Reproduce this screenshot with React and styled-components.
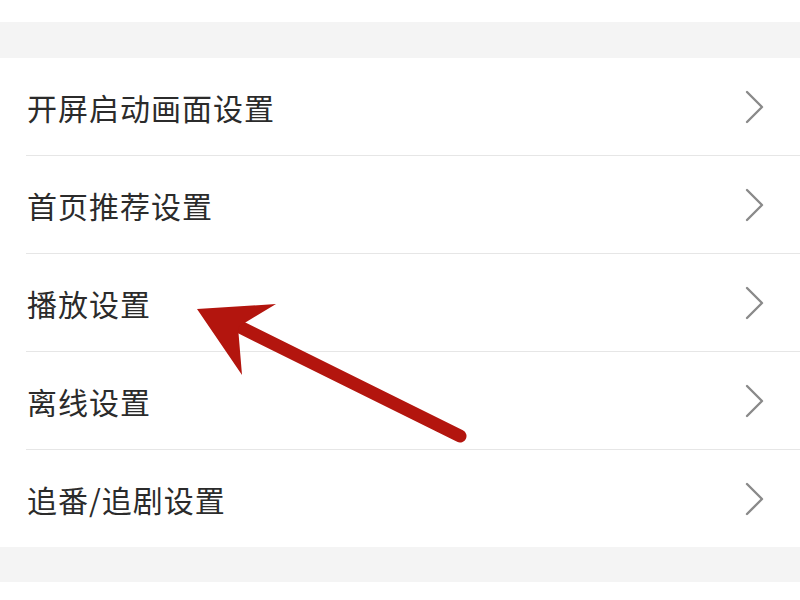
import React from "react";
import styled, { createGlobalStyle } from "styled-components";

const Global = createGlobalStyle`
  html, body {
    margin: 0;
    padding: 0;
    background: #ffffff;
  }
  body {
    font-family: "Noto Sans CJK SC", "Noto Sans", sans-serif;
  }
`;

const Page = styled.div`
  position: relative;
  width: 800px;
  height: 600px;
  overflow: hidden;
  background: #ffffff;
`;

const TopStrip = styled.div`
  height: 22px;
  background: #ffffff;
`;

const Band = styled.div`
  height: ${props => props.h}px;
  background: #f4f4f4;
`;

const List = styled.div`
  background: #ffffff;
  padding-left: 26px;
`;

const Row = styled.div`
  height: 97px;
  display: flex;
  align-items: center;
  justify-content: space-between;
  padding-right: 35px;
  border-bottom: ${props => (props.last ? "none" : "1px solid #e6e6e6")};
`;

const Label = styled.span`
  font-size: 30px;
  color: #2b2b2b;
  letter-spacing: 1px;
  padding-left: 1px;
  line-height: 1;
`;

const Chevron = () => (
  <svg width="20" height="34" viewBox="0 0 20 34">
    <path d="M2 2 L17 17 L2 32" fill="none" stroke="#8a8a8a" strokeWidth="2.4" strokeLinecap="round" strokeLinejoin="round" />
  </svg>
);

// red arrow drawn over the list
const Overlay = styled.svg`
  position: absolute;
  left: 0;
  top: 0;
  pointer-events: none;
`;

const items = ["开屏启动画面设置", "首页推荐设置", "播放设置", "离线设置", "追番/追剧设置"];

export default function App() {
  return (
    <Page>
      <Global />
      <TopStrip />
      <Band h={36} />
      <List>
        {items.map((t, i) => (
          <Row key={t} last={i === items.length - 1}>
            <Label>{t}</Label>
            <Chevron />
          </Row>
        ))}
      </List>
      <Band h={35} />
      <Overlay width="800" height="600" viewBox="0 0 800 600">
        <line x1="234" y1="324" x2="460" y2="436" stroke="#b3150e" strokeWidth="13" strokeLinecap="round" />
        <polygon points="197,309 276,304 238,327 242,375" fill="#b3150e" />
      </Overlay>
    </Page>
  );
}
